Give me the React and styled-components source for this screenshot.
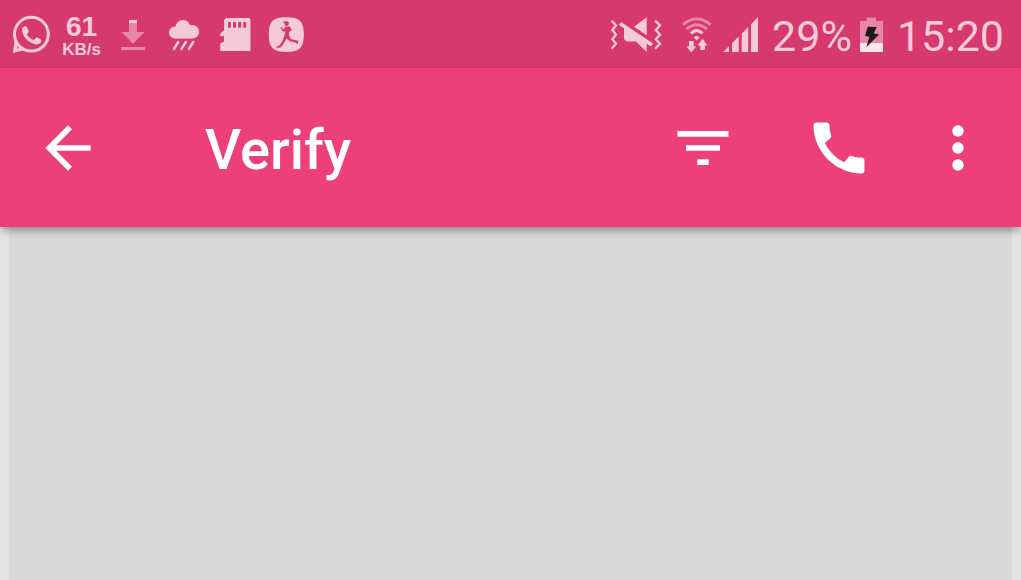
import React from "react";
import styled, { createGlobalStyle, ThemeProvider } from "styled-components";

const theme = {
  statusBarBgColor: "#d6396d",
  topBarBgColor: "#ed407a",
  statusColor: "#f4cad9",
  statusMutedColor: "#e985a8",
  pageBgColor: "#e3e3e3",
  panelBgColor: "#d8d8d8",
};

const GlobalStyle = createGlobalStyle`
  body {
    margin: 0;
    font-family: Roboto, "Liberation Sans", sans-serif;
  }
`;

const Screen = styled.div`
  display: flex;
  flex-direction: column;
  min-height: 100vh;
  background-color: ${(props) => props.theme.pageBgColor};
`;

// stacked above the content so the header's shadow falls on it
const TopBars = styled.div`
  position: relative;
  z-index: 1;
`;

const StatusBar = styled.div`
  display: flex;
  justify-content: space-between;
  align-items: center;
  height: 68px;
  padding: 0 17px 0 5px;
  color: ${(props) => props.theme.statusColor};
  background-color: ${(props) => props.theme.statusBarBgColor};
`;

const Notifications = styled.div`
  display: flex;
  align-items: center;
`;

const Slot = styled.div`
  display: flex;
  justify-content: center;
  width: 51px;
`;

const Speed = styled.div`
  display: flex;
  flex-direction: column;
  align-items: center;
  font-family: "Liberation Sans", sans-serif;
  font-weight: bold;
`;

const SpeedValue = styled.span`
  font-size: 28px;
  line-height: 30px;
`;

const SpeedUnit = styled.span`
  font-size: 17px;
  line-height: 15px;
`;

const SystemStatus = styled.div`
  display: flex;
  align-items: center;
  gap: 8px;
`;

const StatusText = styled.span`
  padding-top: 4px;
  font-size: 43px;
  line-height: 50px;
`;

const StatusIcon = styled.svg`
  display: block;
  flex: none;
  height: 40px;
  fill: currentColor;

  .muted {
    fill: ${(props) => props.theme.statusMutedColor};
  }
  .line {
    fill: none;
    stroke: currentColor;
  }
  .muted-line {
    fill: none;
    stroke: ${(props) => props.theme.statusMutedColor};
  }
  .cut {
    fill: ${(props) => props.theme.statusBarBgColor};
  }
`;

const Header = styled.header`
  display: flex;
  align-items: center;
  height: 159px;
  padding-right: 12px;
  color: #ffffff;
  background-color: ${(props) => props.theme.topBarBgColor};
  box-shadow: 0 4px 8px -1px rgba(0, 0, 0, 0.38);
`;

const Title = styled.h1`
  flex: 1;
  margin: 0;
  padding: 5px 0 0 69px;
  font-size: 56px;
  font-weight: 500;
  line-height: 68px;
`;

const IconButton = styled.button`
  display: flex;
  justify-content: center;
  align-items: center;
  width: ${(props) => props.$width || 136}px;
  height: 136px;
  padding: 0;
  border: none;
  color: inherit;
  background: none;
  cursor: pointer;
`;

const ActionIcon = styled.svg`
  display: block;
  width: 68px;
  height: 68px;
  fill: currentColor;
`;

const Main = styled.main`
  display: flex;
  flex: 1;
  padding: 0 9px;
`;

const Panel = styled.section`
  flex: 1;
  background-color: ${(props) => props.theme.panelBgColor};
`;

const WhatsAppIcon = () => (
  <StatusIcon width="40" viewBox="0 0 40 40">
    <circle className="line" cx="20.4" cy="20.2" r="16.9" strokeWidth="3" />
    <path d="M3.8 26 L1.8 39 L14.4 36 L12 32.8 L6 34.8 L7.4 28.6 Z" />
    <path d="M11 15.6 C11.2 13 13.3 11.9 15 12.3 C16.2 12.7 17.2 16 17.6 17.4 C17.8 18.6 16 19.6 15.8 20.6 C17.6 23.6 20.2 25.2 22.8 26 C23.8 25.6 24.6 23.8 25.6 23.6 C26.8 23.6 29.6 25.2 30.3 26 C30.6 28.6 28 30.6 25.2 30.4 C18 29.6 10.8 22.4 11 15.6 Z" />
  </StatusIcon>
);

const DownloadIcon = () => (
  <StatusIcon width="26" viewBox="0 0 26 40">
    <path className="muted" d="M9 9 H17 V18 H24.5 L13 29.8 L1.5 18 H9 Z M1 33 H25 V36 H1 Z" />
    <path d="M9 6 H17 V9 H9 Z" />
  </StatusIcon>
);

const RainIcon = () => (
  <StatusIcon width="32" viewBox="0 0 32 40">
    <circle cx="7" cy="18.6" r="6" />
    <circle cx="15" cy="13.4" r="7.4" />
    <circle cx="24.4" cy="17.8" r="6.8" />
    <path d="M7 14 H24.4 V24.6 H7 Z" />
    <path
      className="line"
      d="M10.3 28 L5.9 35 M17.9 28 L13.5 35 M25.3 28 L20.9 35"
      strokeWidth="2.4"
      strokeLinecap="round"
    />
  </StatusIcon>
);

const SdCardIcon = () => (
  <StatusIcon width="32" viewBox="0 0 32 40">
    <path d="M7 4 H29.5 Q31.5 4 31.5 6 V37 H1.2 V29.4 L5 27.5 V22.3 H1.2 V19.4 L5 16.4 V6 Z" />
    <path
      className="cut"
      d="M9 8 H11.9 V13.8 H9 Z M14.1 8 H17 V13.8 H14.1 Z M19.2 8 H22.1 V13.8 H19.2 Z M24.3 8 H27.2 V13.8 H24.3 Z"
    />
  </StatusIcon>
);

const RunnerIcon = () => (
  <StatusIcon width="36" viewBox="0 0 36 40">
    <path d="M18.3 3.3 C31.5 3.3 35.8 7.4 35.8 20.6 C35.8 33.8 31.5 38 18.3 38 C5.1 38 0.8 33.8 0.8 20.6 C0.8 7.4 5.1 3.3 18.3 3.3 Z" />
    <circle className="cut" cx="18.6" cy="9.8" r="2.2" />
    <path className="cut" d="M15.2 7.2 L20 7.8 L21.2 9.6 L16 9.2 Z" />
    <path
      className="cut"
      d="M17.6 12.4 L21.6 12.4 L23.8 15.8 L21 18.2 L21 21.6 L23.2 25.2 L30.2 26.8 L29.8 30.8 L28.2 28.8 L22 27.2 L18.4 24.6 L15.2 30.6 L12.2 33.8 L8.4 33.8 L8.8 32.4 L11.4 31.4 L14.2 27.6 L16.4 21.6 L17.4 17.4 L14.6 17.4 L12.4 13.6 L13.4 13 L15.4 15.4 Z"
    />
  </StatusIcon>
);

const MuteIcon = () => (
  <StatusIcon width="64" viewBox="0 0 64 40">
    <path
      className="line"
      d="M1.5 6.7 L6 11.3 L2.4 16 L6 20.7 L2.4 25.2 L6 29.7 L1.5 34.7 M45 6.7 L50 11.3 L45.8 16 L50 20.7 L45.8 25.2 L50 29.7 L45 34.7"
      strokeWidth="2.3"
    />
    <path d="M24 12.7 L36.7 3.3 V21.3 Z M14 13 L36.7 28.6 V38 L26 27.4 H16.4 L14 25 Z" />
    <path className="line" d="M10 9.6 L42 31" strokeWidth="3.6" />
  </StatusIcon>
);

const WifiIcon = () => (
  <StatusIcon width="33" viewBox="0 0 33 40">
    <path className="muted-line" d="M0.9 10.6 Q14.7 -0.6 28.5 10.6 M4.5 15 Q14.7 6.4 24.9 15" strokeWidth="3" />
    <path className="line" d="M9 19.4 Q14.7 14 20.4 19.4" strokeWidth="3" />
    <path d="M11.8 23.4 Q14.7 20.6 17.6 23.4 L14.7 26.4 Z" />
    <path d="M7 27 H11.7 V32.4 H14.2 L9.3 38.4 L4.5 32.4 H7 Z M18.2 36 V31.4 H15.6 L20.6 24.8 L25.4 31.4 H23 V36 Z" />
  </StatusIcon>
);

const SignalIcon = () => (
  <StatusIcon width="41" viewBox="0 0 41 40">
    <path d="M0.3 38 L6 32 V38 Z M9 38 V29.3 L15.7 22.5 V38 Z M18.7 38 V19.7 L25.2 13 V38 Z M28 38 V10.3 L35 3.2 V38 Z" />
  </StatusIcon>
);

const BatteryIcon = () => (
  <StatusIcon width="29" viewBox="0 0 29 40">
    <path className="muted" d="M6.7 3.5 H16 V7 H23 V29 H0 V7 H6.7 Z" />
    <path d="M0 29 H23 V38 H0 Z" fill="#fae6ed" />
    <path
      d="M7.7 12.7 L16.8 13 L13.7 19.6 L19.2 20.4 L6.4 33 L9.4 22.8 L5 22 Z"
      fill="#211a1d"
    />
  </StatusIcon>
);

const App = () => {
  return (
    <ThemeProvider theme={theme}>
      <GlobalStyle />
      <Screen>
        <TopBars>
          <StatusBar>
            <Notifications>
              <Slot>
                <WhatsAppIcon />
              </Slot>
              <Slot>
                <Speed>
                  <SpeedValue>61</SpeedValue>
                  <SpeedUnit>KB/s</SpeedUnit>
                </Speed>
              </Slot>
              <Slot>
                <DownloadIcon />
              </Slot>
              <Slot>
                <RainIcon />
              </Slot>
              <Slot>
                <SdCardIcon />
              </Slot>
              <Slot>
                <RunnerIcon />
              </Slot>
            </Notifications>
            <SystemStatus>
              <MuteIcon />
              <WifiIcon />
              <SignalIcon />
              <StatusText>29%</StatusText>
              <BatteryIcon />
              <StatusText>15:20</StatusText>
            </SystemStatus>
          </StatusBar>
          <Header>
            <IconButton type="button" aria-label="Back">
              <ActionIcon viewBox="0 0 24 24">
                <path d="M20 11H7.83l5.59-5.59L12 4l-8 8 8 8 1.41-1.41L7.83 13H20v-2z" />
              </ActionIcon>
            </IconButton>
            <Title>Verify</Title>
            <IconButton type="button" aria-label="Filter">
              <ActionIcon viewBox="0 0 24 24">
                <path d="M10 18h4v-2h-4v2zM3 6v2h18V6H3zm3 7h12v-2H6v2z" />
              </ActionIcon>
            </IconButton>
            <IconButton type="button" aria-label="Call">
              <ActionIcon viewBox="0 0 24 24">
                <path d="M20.01 15.38c-1.23 0-2.42-.2-3.53-.56-.35-.12-.74-.03-1.01.24l-1.57 1.97c-2.83-1.35-5.48-3.9-6.89-6.83l1.95-1.66c.27-.28.35-.67.24-1.02-.37-1.11-.56-2.3-.56-3.53 0-.54-.45-.99-.99-.99H4.19C3.65 3 3 3.24 3 3.99 3 13.28 10.73 21 20.01 21c.71 0 .99-.63.99-1.18v-3.45c0-.54-.45-.99-.99-.99z" />
              </ActionIcon>
            </IconButton>
            <IconButton type="button" aria-label="More options" $width={102}>
              <ActionIcon viewBox="0 0 24 24">
                <path d="M12 8c1.1 0 2-.9 2-2s-.9-2-2-2-2 .9-2 2 .9 2 2 2zm0 2c-1.1 0-2 .9-2 2s.9 2 2 2 2-.9 2-2-.9-2-2-2zm0 6c-1.1 0-2 .9-2 2s.9 2 2 2 2-.9 2-2-.9-2-2-2z" />
              </ActionIcon>
            </IconButton>
          </Header>
        </TopBars>
        <Main>
          <Panel />
        </Main>
      </Screen>
    </ThemeProvider>
  );
};

export default App;
